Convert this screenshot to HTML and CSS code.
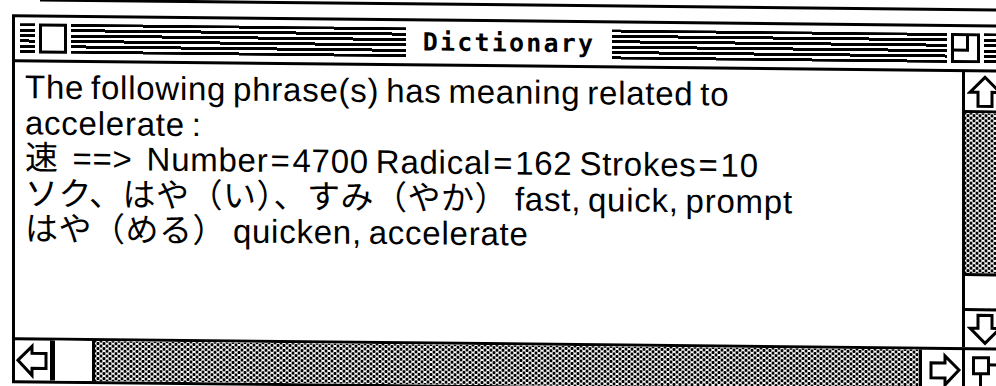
FILE: index.html
```html
<!DOCTYPE html>
<html lang="ja">
<head>
  <meta charset="UTF-8">
  <title>Dictionary</title>
  <link rel="stylesheet" href="styles.css">
</head>
<body>
  <div class="screen">
    <div class="menu-edge"></div>

    <div class="window">
      <div class="titlebar">
        <span class="lines lines-short"></span>
        <span class="closebox"></span>
        <span class="lines lines-fill"></span>
        <span class="title">Dictionary</span>
        <span class="lines lines-fill"></span>
        <svg class="zoombox" width="29" height="30" viewBox="0 0 29 30">
          <rect x="1.5" y="1.5" width="26" height="27" fill="#fff" stroke="#000" stroke-width="3"/>
          <path d="M1.5 17 H16.5 V1.5" fill="none" stroke="#000" stroke-width="3"/>
        </svg>
        <span class="lines lines-short"></span>
      </div>

      <div class="pane">
        <div class="text">
          <div class="line">The following phrase(s) has meaning related to</div>
          <div class="line">accelerate :</div>
          <div class="line"><span class="jp">速</span><span class="gap">==&gt;</span><span class="gap">Number<span class="eq">=</span>4700 Radical<span class="eq">=</span>162 Strokes<span class="eq">=</span>10</span></div>
          <div class="line"><span class="jp">ソク、はや（い）、すみ（やか）</span> fast, quick, prompt</div>
          <div class="line"><span class="jp">はや（める）</span> quicken, accelerate</div>
        </div>

        <div class="vbar">
          <div class="arrow arrow-up">
            <svg width="36" height="38" viewBox="0 0 36 38">
              <path d="M18 5 L33 20 L25 20 L25 34 L11 34 L11 20 L3 20 Z" fill="#fff" stroke="#000" stroke-width="3"/>
            </svg>
          </div>
          <div class="track track-v">
            <div class="thumb thumb-v"></div>
          </div>
          <div class="arrow arrow-down">
            <svg width="36" height="36" viewBox="0 0 36 36">
              <path d="M18 32 L33 17 L25 17 L25 4 L11 4 L11 17 L3 17 Z" fill="#fff" stroke="#000" stroke-width="3"/>
            </svg>
          </div>
        </div>
      </div>

      <div class="hbar">
        <div class="arrow arrow-left">
          <svg width="35" height="40" viewBox="0 0 35 40">
            <path d="M3 20 L17 6 L17 13 L31 13 L31 28 L17 28 L17 35 Z" fill="#fff" stroke="#000" stroke-width="3"/>
          </svg>
        </div>
        <div class="thumb thumb-h"></div>
        <div class="track track-h"></div>
        <div class="arrow arrow-right">
          <svg width="40" height="40" viewBox="0 0 40 40">
            <path d="M37 20 L23 6 L23 13 L9 13 L9 28 L23 28 L23 35 Z" fill="#fff" stroke="#000" stroke-width="3"/>
          </svg>
        </div>
        <div class="grow">
          <svg width="39" height="40" viewBox="0 0 39 40">
            <rect x="15.5" y="14.5" width="22" height="24" fill="#fff" stroke="#000" stroke-width="3"/>
            <rect x="8.5" y="7.5" width="15" height="16" fill="#fff" stroke="#000" stroke-width="3"/>
          </svg>
        </div>
      </div>
    </div>
  </div>
</body>
</html>
```

FILE: styles.css
```css
html, body { margin: 0; }
body {
  width: 996px;
  height: 386px;
  overflow: hidden;
  background: #fff;
  font-family: 'Liberation Sans', 'Noto Sans CJK JP', sans-serif;
  color: #000;
}

/* the scan is slightly skewed, right side lower */
.screen {
  transform: skewY(0.6deg);
  transform-origin: 0 0;
}
.menu-edge {
  height: 3px;
  margin: -2px 0 0 40px;
  background: #000;
}

.window {
  width: 995px;
  height: 369px;
  margin: 13px 0 0 12px;
  border: 3px solid #000;
  box-sizing: border-box;
  display: flex;
  flex-direction: column;
  background: #fff;
}

/* title bar */
.titlebar {
  height: 45px;
  flex: none;
  box-sizing: border-box;
  border-bottom: 3px solid #000;
  display: flex;
  align-items: center;
  gap: 4px;
  padding: 0 5px;
}
.lines {
  height: 30px;
  background: repeating-linear-gradient(to bottom, #000 0 3px, #fff 3px 5.4px);
}
.lines-short { width: 15px; flex: none; }
.lines-fill { flex: 1; }
.closebox {
  width: 28px;
  height: 30px;
  flex: none;
  box-sizing: border-box;
  border: 3px solid #000;
}
.zoombox { flex: none; display: block; }
.title {
  padding: 0 13px;
  font-family: 'DejaVu Sans Mono', monospace;
  font-size: 25px;
  font-weight: bold;
  letter-spacing: 2.2px;
  line-height: 30px;
}

/* content */
.pane {
  flex: 1;
  display: flex;
  min-height: 0;
}
.text {
  flex: 1;
  padding: 7px 0 0 10px;
  font-size: 33px;
  letter-spacing: 0.75px;
  word-spacing: -3px;
  line-height: 35px;
  white-space: nowrap;
}
.line { height: 35.5px; }
.jp {
  font-family: 'Noto Sans CJK JP', sans-serif;
  font-size: 33px;
  letter-spacing: 0.5px;
  line-height: 20px;
}
.gap { margin-left: 14px; }
.eq { margin: 0 2px; }

/* scroll bars */
.vbar {
  width: 42px;
  flex: none;
  box-sizing: border-box;
  border-left: 3px solid #000;
  display: flex;
  flex-direction: column;
}
.arrow {
  flex: none;
  display: flex;
  align-items: center;
  justify-content: center;
  box-sizing: border-box;
}
.arrow svg { display: block; }
.arrow-up { height: 41px; border-bottom: 3px solid #000; }
.arrow-down { height: 39px; border-top: 3px solid #000; }

.track {
  background-color: #fff;
  background-image:
    radial-gradient(circle, #000 1.3px, transparent 1.9px),
    radial-gradient(circle, #000 1.3px, transparent 1.9px);
  background-size: 6px 5px;
  background-position: 0 0, 3px 2.5px;
}
.track-v {
  flex: 1;
  display: flex;
  flex-direction: column;
  justify-content: flex-end;
}
.thumb { background: #fff; box-sizing: border-box; }
.thumb-v { height: 35px; border-top: 3px solid #000; }

.hbar {
  height: 43px;
  flex: none;
  box-sizing: border-box;
  border-top: 3px solid #000;
  display: flex;
}
.arrow-left { width: 38px; border-right: 3px solid #000; }
.thumb-h {
  width: 42px;
  flex: none;
  border-left: 2px solid #000;
  border-right: 3px solid #000;
}
.track-h { flex: 1; }
.arrow-right { width: 43px; border-left: 3px solid #000; }
.grow {
  width: 42px;
  flex: none;
  box-sizing: border-box;
  border-left: 3px solid #000;
}
.grow svg { display: block; }
```
